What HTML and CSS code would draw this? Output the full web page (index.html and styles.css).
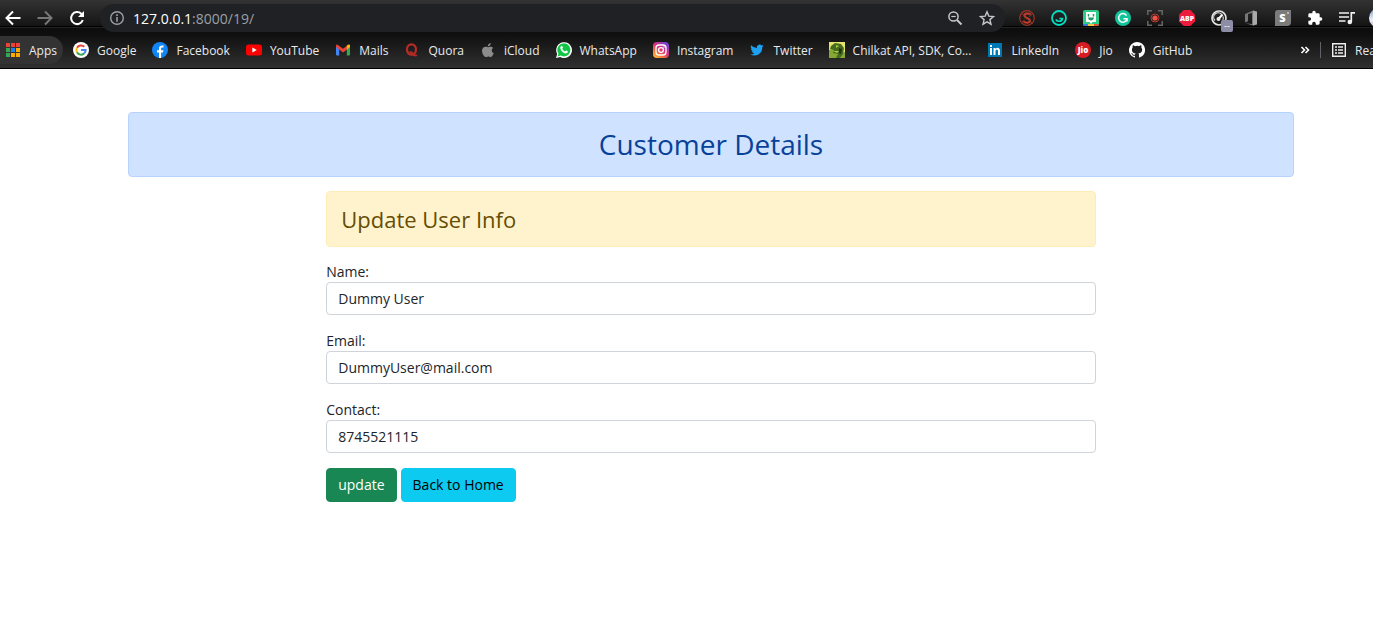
FILE: index.html
```html
<!DOCTYPE html>
<html lang="en">
<head>
<meta charset="utf-8">
<title>Customer Details</title>
<link rel="stylesheet" href="styles.css">
</head>
<body>
<header class="chrome">
  <div class="toolbar">
    <nav class="nav" aria-label="History">
      <button class="icon-btn" type="button" aria-label="Back"><svg viewBox="0 0 16 16"><path d="M15.500 8H2M8 1.500 1.500 8 8 14.500" fill="none" stroke="#fff" stroke-width="2"/></svg></button>
      <button class="icon-btn" type="button" aria-label="Forward"><svg viewBox="0 0 16 16"><path d="M.5 8H14M8 1.500 14.500 8 8 14.500" fill="none" stroke="#777" stroke-width="2"/></svg></button>
      <button class="icon-btn" type="button" aria-label="Reload"><svg viewBox="0 0 16 16"><path d="M13.800 10A6 6 0 1 1 12.300 3.800L14 5.500" fill="none" stroke="#fff" stroke-width="2"/><path d="M15 1v6H9z" fill="#fff"/></svg></button>
    </nav>
    <div class="omnibox">
      <svg class="icon" viewBox="0 0 16 16"><circle cx="8" cy="8" r="6.300" fill="none" stroke="#9aa0a6" stroke-width="1.400"/><path d="M7.200 4.300h1.600v1.600H7.200zM7.200 7h1.600v4.800H7.200z" fill="#9aa0a6"/></svg>
      <span class="url">127.0.0.1<span class="url-path">:8000/19/</span></span>
      <button class="icon-btn" type="button" aria-label="Zoom"><svg viewBox="0 0 16 16"><circle cx="6.500" cy="6.500" r="4.600" fill="none" stroke="#c4c7ca" stroke-width="1.500"/><path d="M10 10l4.500 4.500" stroke="#c4c7ca" stroke-width="2"/><path d="M4.300 6.500h4.400" stroke="#c4c7ca" stroke-width="1.200"/></svg></button>
      <button class="icon-btn" type="button" aria-label="Bookmark this page"><svg viewBox="0 0 16 16"><path d="M8 1.800l1.800 4.300 4.700.4-3.600 3.100 1.100 4.600L8 11.800l-4 2.400 1.100-4.600L1.500 6.500l4.700-.4z" fill="none" stroke="#c4c7ca" stroke-width="1.400"/></svg></button>
    </div>
    <div class="extensions">
      <svg class="icon" viewBox="0 0 16 16"><circle cx="8" cy="8" r="7.300" fill="none" stroke="#a03526" stroke-width="1.200"/><path d="M11.500 4.500C9.500 2.500 5 3.500 5.500 6s5.500 2 5.500 4.500-4.500 3-6.500.8" fill="none" stroke="#c53b2b" stroke-width="2"/><path d="M2.500 3l11 10.500M3 12l2.500-2M10.500 6.500L13 4" stroke="#a03526"/></svg>
      <svg class="icon" viewBox="0 0 16 16"><circle cx="8" cy="8" r="7" fill="none" stroke="#00dfc0" stroke-width="1.800"/><path d="M4.800 9.500c1.500 2.500 6 2.500 6.600-1H8.300" fill="none" stroke="#00dfc0" stroke-width="1.700"/></svg>
      <svg class="icon" viewBox="0 0 16 16"><rect width="16" height="16" rx="2" fill="#2ecc87"/><path d="M0 14h5l2 2H2q-2 0-2-2z" fill="#3879e8"/><path d="M5 14h6v2H5z" fill="#f4c542"/><path d="M11 14h5q0 2-2 2h-3z" fill="#e44d3a"/><path d="M3 2h10v10h-3.500L8 14l-1.500-2H3z" fill="#fff"/><path d="M5.500 4v2.500M10.500 4v2.500" stroke="#229a66" stroke-width="1.500"/><path d="M5 7.500h6q-.5 3-3 3t-3-3z" fill="#229a66"/></svg>
      <svg class="icon" viewBox="0 0 16 16"><circle cx="8" cy="8" r="8" fill="#15c39a"/><path d="M11.500 5.500A4.300 4.300 0 1 0 12 9.200M8.500 8.800H12v2.700" fill="none" stroke="#fff" stroke-width="1.500"/></svg>
      <svg class="icon" viewBox="0 0 16 16"><path d="M.8 5V.8H5M11 .8h4.200V5M15.200 11v4.200H11M5 15.200H.8V11" fill="none" stroke="#666" stroke-width="1.500"/><circle cx="8" cy="8" r="4" fill="none" stroke="#b83a30"/><circle cx="8" cy="8" r="2.600" fill="#ef5448"/></svg>
      <svg class="icon" viewBox="0 0 16 16"><path d="M4.700 0h6.600L16 4.700v6.600L11.300 16H4.700L0 11.300V4.700z" fill="#ed1c3c"/><text x="8" y="10.500" text-anchor="middle" class="logo-text abp">ABP</text></svg>
      <span class="badged"><svg class="icon" viewBox="0 0 16 16"><circle cx="8" cy="8" r="7" fill="none" stroke="#e3e3e3" stroke-width="1.700"/><path d="M4 10.500A4.500 4.500 0 0 1 10.500 4.200M12 6.500q.8 2-.2 4" fill="none" stroke="#ddd" stroke-width="1.200"/><path d="M7 9.500l4.500-5" stroke="#fff" stroke-width="2"/><circle cx="7.500" cy="9" r="2" fill="#eee"/></svg><span class="badge">--</span></span>
      <svg class="icon" viewBox="0 0 16 16"><path d="M10 .5l4 1.300v12.400l-4 1.300-7.500-2.300 6.500.8V3L5 4v7.300L2 12.500V4z" fill="#777"/><path d="M10 .5l4 1.300v12.400l-4 1.300z" fill="#aaa"/></svg>
      <svg class="icon" viewBox="0 0 16 16"><path d="M3 0h13v12q0 4-4 4H0V3q0-3 3-3z" fill="#7b7b7b"/><text x="7.500" y="12" text-anchor="middle" class="logo-text letter">S</text><circle cx="13" cy="3" r="1" fill="#ccc"/></svg>
      <svg class="icon" viewBox="0 0 24 24"><path d="M20.500 11H19V7a2 2 0 0 0-2-2h-4V3.500a2.500 2.500 0 0 0-5 0V5H4a2 2 0 0 0-2 2v3.800h1.500a2.700 2.700 0 0 1 0 5.400H2V20a2 2 0 0 0 2 2h3.800v-1.500a2.700 2.700 0 0 1 5.400 0V22H17a2 2 0 0 0 2-2v-4h1.500a2.500 2.500 0 0 0 0-5z" fill="#fff"/></svg>
      <svg class="icon" viewBox="0 0 16 16"><path d="M0 3h10M0 7h10M0 11h6.500M12.300 12V2.800H16" fill="none" stroke="#f1f1f1" stroke-width="1.700"/><circle cx="10.800" cy="12" r="2.300" fill="#f1f1f1"/></svg>
      <span class="avatar"></span>
    </div>
  </div>
  <nav class="bookmarks" aria-label="Bookmarks">
    <a class="apps" href="#"><svg class="icon" viewBox="0 0 16 16"><path d="M1 1h4v4H1zM6 1h4v4H6zM11 1h4v4h-4z" fill="#ea4335"/><path d="M1 6h4v4H1z" fill="#34a853"/><path d="M6 6h4v4H6z" fill="#1a84f5"/><path d="M11 6h4v4h-4z" fill="#f9ab00"/><path d="M1 11h4v4H1z" fill="#34a853"/><path d="M6 11h4v4H6zM11 11h4v4h-4z" fill="#f9ab00"/></svg>Apps</a>
    <div class="links">
      <a href="#"><svg class="icon" viewBox="0 0 16 16"><circle cx="8" cy="8" r="8" fill="#fff"/><g fill="none" stroke-width="2"><path d="M4 5.700A4.600 4.600 0 0 1 11.300 4.800" stroke="#ea4335"/><path d="M4 5.700a4.600 4.600 0 0 0 0 4.600" stroke="#fbbc05"/><path d="M4 10.300a4.600 4.600 0 0 0 7.300 1" stroke="#34a853"/><path d="M11.300 11.300A4.600 4.600 0 0 0 12.600 8H8" stroke="#4285f4"/></g></svg>Google</a>
      <a href="#"><svg class="icon" viewBox="0 0 16 16"><circle cx="8" cy="8" r="8" fill="#1285f5"/><path d="M7 16v-5.500H5V8.200h2V6.500q0-3 3-3h1.500v2H10q-.9 0-.9 1v1.700h2.300l-.4 2.300H9.100V16z" fill="#fff"/></svg>Facebook</a>
      <a href="#"><svg class="icon" viewBox="0 0 16 16"><rect y="2.500" width="16" height="11" rx="2.500" fill="#f00"/><path d="M6.300 5.500v5L10.800 8z" fill="#fff"/></svg>YouTube</a>
      <a href="#"><svg class="icon" viewBox="0 0 16 16"><path d="M1 4v8.500q0 1 1 1h2.200V6.500z" fill="#4285f4"/><path d="M15 4v8.500q0 1-1 1h-2.200V6.500z" fill="#34a853"/><path d="M1 3.500q0-1 1.200-1L8 6.800l4-3v3.700l-4 3-3.800-3L1 5z" fill="#ea4335"/><path d="M11.800 3.700q1-1.300 2.200-1.200 1 .1 1 1.200V5l-3.200 2.500z" fill="#fbbc04"/></svg>Mails</a>
      <a href="#"><svg class="icon" viewBox="0 0 16 16"><ellipse cx="7.500" cy="7.500" rx="4.500" ry="5.200" fill="none" stroke="#b92b27" stroke-width="2.200"/><path d="M5.500 10.500q2-1.300 3.500 1.500 1.300 2.400 4 1.300" fill="none" stroke="#b92b27" stroke-width="1.700"/></svg>Quora</a>
      <a href="#"><svg class="icon" viewBox="0 0 16 16"><path d="M10.700 1q.1 2.800-2.900 3.500Q7.800 1.800 10.700 1zM8 5.200c1 0 3.500-1.500 5.200.8-2.300 1.500-1.600 4.300.6 5.300C12.500 14 11.500 15.600 10 15c-1.600-.7-2-.6-3.500 0C4.500 15.700 2 11.500 2 9c0-3.500 2.800-5 6-3.800z" fill="#8c8c8c"/></svg>iCloud</a>
      <a href="#"><svg class="icon" viewBox="0 0 16 16"><path d="M0 16l1.200-4A7.900 7.900 0 1 1 4.200 15z" fill="#fff"/><path d="M1.600 14.400l.9-2.800a6.500 6.500 0 1 1 2.200 2z" fill="#10c544"/><path d="M5.200 4q1-.5 1.300.4l.5 1.300-.8 1.200q1 1.800 2.800 2.500l1-1 1.900.9q.2 2-2 2.300Q6.700 11.300 4.500 7q-.8-2 .7-3z" fill="#fff"/></svg>WhatsApp</a>
      <a href="#"><svg class="icon" viewBox="0 0 16 16"><defs><linearGradient id="ig" x1="0" y1="1" x2=".8" y2="0"><stop offset="0" stop-color="#fed34a"/><stop offset=".3" stop-color="#f77a35"/><stop offset=".6" stop-color="#d92e80"/><stop offset="1" stop-color="#6b46d6"/></linearGradient></defs><rect width="16" height="16" rx="4" fill="url(#ig)"/><rect x="3" y="3" width="10" height="10" rx="3" fill="none" stroke="#fff" stroke-width="1.300"/><circle cx="8" cy="8" r="2.400" fill="none" stroke="#fff" stroke-width="1.300"/><circle cx="11" cy="5" r=".7" fill="#fff"/></svg>Instagram</a>
      <a href="#"><svg class="icon" viewBox="0 0 24 24"><path d="M22 5.900a8 8 0 0 1-2.400.7 4.100 4.100 0 0 0 1.800-2.300 8 8 0 0 1-2.600 1 4.100 4.100 0 0 0-7 3.700A11.600 11.600 0 0 1 3.400 4.700a4.100 4.100 0 0 0 1.300 5.500 4 4 0 0 1-1.900-.5 4.100 4.100 0 0 0 3.300 4 4 4 0 0 1-1.900.1 4.100 4.100 0 0 0 3.900 2.900A8.200 8.200 0 0 1 2 18.400 11.600 11.600 0 0 0 19.900 8 8 8 0 0 0 22 5.900z" fill="#1da1f2"/></svg>Twitter</a>
      <a href="#"><svg class="icon" viewBox="0 0 16 16"><path d="M0 0h16v16H0z" fill="#e3e66a"/><path d="M0 8l4-1 2 3 4 1 6-1v6H0z" fill="#84a832"/><path d="M2 4l4-3 6 1 3 4-1 6-3 4H7l2-4-5-1 1-3-4-1z" fill="#476a20"/><path d="M7 3l3 1-3 2zM4 9h6l-2 2z" fill="#a9c83e"/><path d="M10 6l3 1-1 5-2-1z" fill="#1d3515"/></svg>Chilkat API, SDK, Co...</a>
      <a href="#"><svg class="icon" viewBox="0 0 16 16"><path d="M1 1h14v14H1z" fill="#0077b5"/><path d="M3 6h2v7H3zM3 3h2v2H3zM6.500 6h2v1q2-2 3.700-.6.800.7.800 2.300V13h-2V9q0-1.500-1.200-1.500T8.500 9v4h-2z" fill="#fff"/></svg>LinkedIn</a>
      <a href="#"><svg class="icon" viewBox="0 0 16 16"><circle cx="8" cy="8" r="8" fill="#d91c24"/><text x="8" y="10.700" text-anchor="middle" class="logo-text jio">Jio</text></svg>Jio</a>
      <a href="#"><svg class="icon" viewBox="0 0 16 16"><path fill="#fff" d="M8 0a8 8 0 0 0-2.530 15.590c.4.070.55-.17.550-.380v-1.490c-2.230.480-2.690-.940-2.690-.940-.360-.930-.890-1.170-.890-1.170-.730-.5.050-.490.050-.490.810.060 1.230.830 1.230.830.710 1.230 1.870.870 2.330.670.070-.520.280-.870.510-1.070-1.780-.2-3.640-.890-3.640-3.950 0-.880.310-1.590.820-2.150-.080-.2-.360-1.020.080-2.120 0 0 .670-.210 2.200.820a7.500 7.500 0 0 1 4 0c1.530-1.040 2.200-.820 2.200-.820.440 1.100.160 1.920.080 2.120.510.560.820 1.270.820 2.150 0 3.070-1.870 3.750-3.650 3.950.290.250.540.730.540 1.480v2.200c0 .210.150.460.550.380A8 8 0 0 0 8 0z"/></svg>GitHub</a>
    </div>
    <div class="bookmark-end">
      <button class="icon-btn small" type="button" aria-label="More bookmarks"><svg viewBox="0 0 10 10"><path d="M1.500 2l3 3-3 3M5.500 2l3 3-3 3" fill="none" stroke="#fff" stroke-width="1.600"/></svg></button>
      <span class="divider"></span>
      <a href="#"><svg class="icon" viewBox="0 0 16 16"><path d="M1.700 1.700h12.600v12.600H1.700z" fill="none" stroke="#eee" stroke-width="1.400"/><path d="M4 5h2M7 5h5M4 8h2M7 8h5M4 11h2M7 11h5" stroke="#eee" stroke-width="1.600"/></svg>Reading list</a>
    </div>
  </nav>
</header>
<main class="page">
  <h1 class="alert alert-primary">Customer Details</h1>
  <section class="panel">
    <h2 class="alert alert-warning">Update User Info</h2>
    <form class="form">
      <div class="field"><label for="name">Name:</label><input id="name" type="text" value="Dummy User"></div>
      <div class="field"><label for="email">Email:</label><input id="email" type="email" value="DummyUser@mail.com"></div>
      <div class="field"><label for="contact">Contact:</label><input id="contact" type="text" value="8745521115"></div>
      <div class="actions">
        <button class="btn btn-success" type="submit">update</button>
        <a class="btn btn-info" href="#">Back to Home</a>
      </div>
    </form>
  </section>
</main>
</body>
</html>
```
FILE: styles.css
```css
* { box-sizing: border-box; }

body {
  margin: 0;
  background: #fff;
  color: #212529;
  font-family: "Open Sans", "Noto Sans", sans-serif;
  font-size: 14px;
  line-height: 21px;
  overflow-x: hidden;
}

a { color: inherit; text-decoration: none; }

/* Browser bars */
.chrome {
  color: #e8eaed;
  background: #0d0d0d;
  border-bottom: 1px solid #000;
  font-size: 12px;
  overflow: hidden;
}

.toolbar {
  display: flex;
  align-items: center;
  height: 36px;
  padding-left: 5px;
  background: linear-gradient(#333 0, #141414 26px, #000 26px, #000 27px, #222 27px, #222 28px, #0c0c0c 28px, #101010 36px);
}

.nav { display: flex; gap: 16px; margin-right: 15px; }

.icon, .icon-btn svg { display: block; width: 16px; height: 16px; flex: none; }

.icon-btn {
  flex: none;
  width: 16px;
  height: 16px;
  padding: 0;
  border: 0;
  background: none;
}

.omnibox {
  flex: 1;
  display: flex;
  align-items: center;
  height: 28px;
  padding: 0 10px 0 9px;
  gap: 16px;
  border-radius: 14px;
  background: #202124;
}

.url { flex: 1; margin-left: -8px; font-size: 14px; color: #fff; }
.url-path { color: #9aa0a6; }

.extensions { display: flex; align-items: center; gap: 16px; margin: 0 -16px 0 14px; }

.badged { position: relative; }

.badge {
  position: absolute;
  left: 10px;
  top: 10px;
  width: 12px;
  height: 12px;
  border-radius: 2px;
  background: #8d8da8;
  color: #fff;
  font-size: 9px;
  line-height: 12px;
  text-align: center;
}

.avatar {
  width: 20px;
  height: 20px;
  margin-left: -2px;
  border-radius: 50%;
  background: linear-gradient(#7f9fc4, #eef2f8 60%, #b8a8c0);
}

.logo-text { fill: #fff; font-family: "Open Sans", sans-serif; font-weight: 800; }
.abp { font-size: 7px; }
.jio { font-size: 8px; }
.letter { font-size: 11px; }

.bookmarks {
  display: flex;
  align-items: center;
  height: 32px;
  padding-bottom: 4px;
  background: linear-gradient(#111, #303030);
}

.bookmarks a { display: flex; align-items: center; gap: 8px; white-space: nowrap; }

.bookmarks .apps {
  height: 28px;
  padding: 0 6px 0 5px;
  border-radius: 0 14px 14px 0;
  background: #333;
}

.links { flex: 1; display: flex; gap: 16px; margin-left: 10px; }

.bookmark-end { display: flex; align-items: center; gap: 10px; flex: none; width: 73px; }
.icon-btn.small, .icon-btn.small svg { width: 10px; height: 10px; }
.divider { flex: none; width: 1px; height: 16px; background: #5f6368; }

/* Page */
.page { padding: 43px 79px 0 128px; }

.alert {
  margin: 0 0 14px;
  border: 1px solid;
  border-radius: 4px;
  font-weight: 500;
}

.alert-primary {
  padding: 14px;
  color: #084298;
  background: #cfe2ff;
  border-color: #b6d4fe;
  font-size: 28px;
  line-height: 35px;
  text-align: center;
}

.alert-warning {
  padding: 14px;
  color: #664d03;
  background: #fff3cd;
  border-color: #ffecb5;
  font-size: 22px;
  line-height: 26px;
}

.panel { width: 66%; margin: 0 auto; }

.field { margin-bottom: 15px; }
.field label { display: block; }

.field input {
  display: block;
  width: 100%;
  height: 33px;
  padding: 0 11px;
  border: 1px solid #ced4da;
  border-radius: 4px;
  color: #212529;
  background: #fff;
  font: inherit;
}

.actions { display: flex; gap: 4px; }

.btn {
  padding: 5px 11px;
  border: 1px solid;
  border-radius: 4px;
  font: inherit;
  line-height: 22px;
}

.btn-success { color: #fff; background: #198754; border-color: #198754; }
.btn-info { color: #000; background: #0dcaf0; border-color: #0dcaf0; }
```
